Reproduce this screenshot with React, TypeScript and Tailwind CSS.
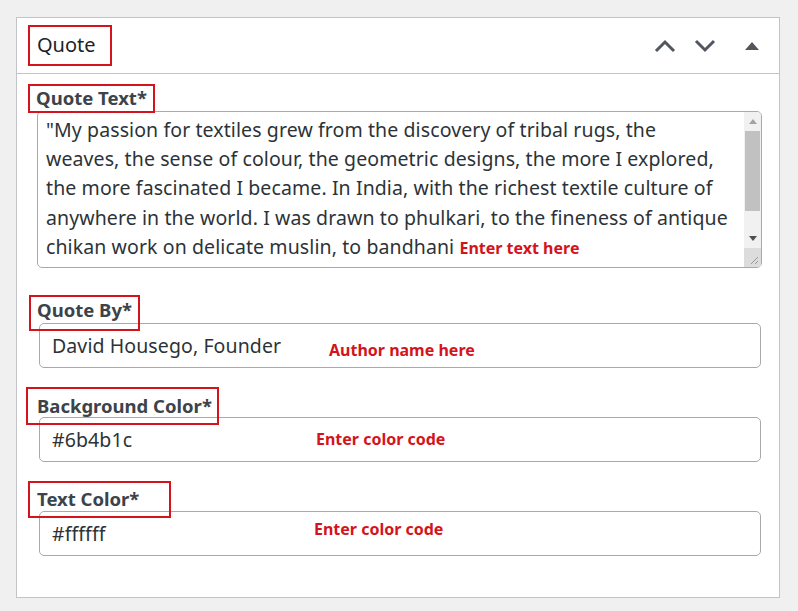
import * as React from 'react'

const font = { fontFamily: '"Noto Sans", "Open Sans", sans-serif' }

const quoteLines = [
  '"My passion for textiles grew from the discovery of tribal rugs, the',
  'weaves, the sense of colour, the geometric designs, the more I explored,',
  'the more fascinated I became. In India, with the richest textile culture of',
  'anywhere in the world. I was drawn to phulkari, to the fineness of antique',
]

function Marked({ className, children }: { className?: string; children: React.ReactNode }) {
  return (
    <span className={`relative z-10 inline-block border-2 border-[#d4141c] ${className ?? ''}`}>{children}</span>
  )
}

function Field({ value, hint, hintLeft, hintTop }: { value: string; hint: string; hintLeft: string; hintTop: string }) {
  return (
    <div className="relative ml-[2px] mr-[1px] flex h-[45px] items-center rounded-[5px] border border-[#a7aaad] bg-white pl-[12px] text-[19.5px] tracking-[0.1px] text-[#2c3338]">
      {value}
      <span className={`absolute text-[16px] font-bold tracking-normal text-[#d4141c] ${hintLeft} ${hintTop}`}>{hint}</span>
    </div>
  )
}

function Scrollbar() {
  return (
    <div className="flex w-[17px] flex-col bg-[#f1f1f1]">
      <div className="flex h-[19px] items-center justify-center">
        <svg width="8" height="5" viewBox="0 0 8 5">
          <path d="M0 5 L4 0 L8 5 Z" fill="#a3a3a3" />
        </svg>
      </div>
      <div className="mx-[1px] h-[80px] bg-[#c1c1c1]" />
      <div className="flex-1" />
      <div className="flex h-[19px] items-center justify-center">
        <svg width="8" height="5" viewBox="0 0 8 5">
          <path d="M0 0 L8 0 L4 5 Z" fill="#505050" />
        </svg>
      </div>
      <div className="flex h-[19px] items-end justify-end bg-[#dcdcdc] p-[2px]">
        <svg width="10" height="10" viewBox="0 0 10 10">
          <path d="M9 2 L2 9 M9 6 L6 9" stroke="#9a9a9a" strokeWidth="1" />
        </svg>
      </div>
    </div>
  )
}

export default function App() {
  return (
    <div className="min-h-[611px] w-[798px] bg-[#f0f0f1] pl-4 pt-[17px]" style={font}>
      <div className="w-[764px] border border-[#c3c4c7] bg-white">
        <div className="flex h-[56px] items-center border-b border-[#c3c4c7] pl-[11px] pr-[20px]">
          <Marked className="pb-[6px] pl-[7px] pr-[14px] pt-[5px]">
            <span className="text-[20px] leading-[26px] text-[#1d2327]">Quote</span>
          </Marked>
          <div className="ml-auto flex items-center">
            <svg width="22" height="14" viewBox="0 0 22 14" className="mr-[18px]">
              <path d="M2 12 L11 3 L20 12" fill="none" stroke="#50575e" strokeWidth="3" />
            </svg>
            <svg width="22" height="14" viewBox="0 0 22 14" className="mr-[29px]">
              <path d="M2 2 L11 11 L20 2" fill="none" stroke="#50575e" strokeWidth="3" />
            </svg>
            <svg width="14" height="10" viewBox="0 0 14 10">
              <path d="M0 9 L7 1 L14 9 Z" fill="#50575e" />
            </svg>
          </div>
        </div>

        <div className="flex flex-col pb-[41px] pl-[20px] pr-[17px] pt-[10px] text-[#3c434a]">
          <div className="-ml-[9px] h-[27px]">
            <Marked className="px-[6px] pt-[1px]">
              <span className="text-[18.5px] font-bold leading-[22px]">Quote Text*</span>
            </Marked>
          </div>
          <div className="flex h-[157px] overflow-hidden rounded-[5px] border border-[#a7aaad]">
            <div className="flex-1 whitespace-nowrap pl-[8px] pt-[3px] text-[19.5px] leading-[29.2px] tracking-[0.1px] text-[#2c3338]">
              {quoteLines.map((l) => (
                <div key={l}>{l}</div>
              ))}
              <div>
                chikan work on delicate muslin, to bandhani{' '}
                <span className="text-[16px] font-bold tracking-normal text-[#d4141c]">Enter text here</span>
              </div>
            </div>
            <Scrollbar />
          </div>

          <div className="mt-[27px] -ml-[8px] h-[34px]">
            <Marked className="pb-[6px] pl-[6px] pr-[6px] pt-[2px]">
              <span className="text-[18.5px] font-bold leading-[22px]">Quote By*</span>
            </Marked>
          </div>
          <div className="-mt-[6px]">
            <Field value="David Housego, Founder" hint="Author name here" hintLeft="left-[289px]" hintTop="top-[14px]" />
          </div>

          <div className="mt-[19px] -ml-[11px] h-[36px]">
            <Marked className="pb-[4px] pl-[9px] pr-[5px] pt-[6px]">
              <span className="text-[18.5px] font-bold leading-[22px]">Background Color*</span>
            </Marked>
          </div>
          <div className="-mt-[6px]">
            <Field value="#6b4b1c" hint="Enter color code" hintLeft="left-[276px]" hintTop="top-[9px]" />
          </div>

          <div className="mt-[19px] -ml-[9px] h-[35px]">
            <Marked className="pb-[4px] pl-[7px] pr-[30px] pt-[5px]">
              <span className="text-[18.5px] font-bold leading-[22px]">Text Color*</span>
            </Marked>
          </div>
          <div className="-mt-[5px]">
            <Field value="#ffffff" hint="Enter color code" hintLeft="left-[274px]" hintTop="top-[5px]" />
          </div>
        </div>
      </div>
    </div>
  )
}
